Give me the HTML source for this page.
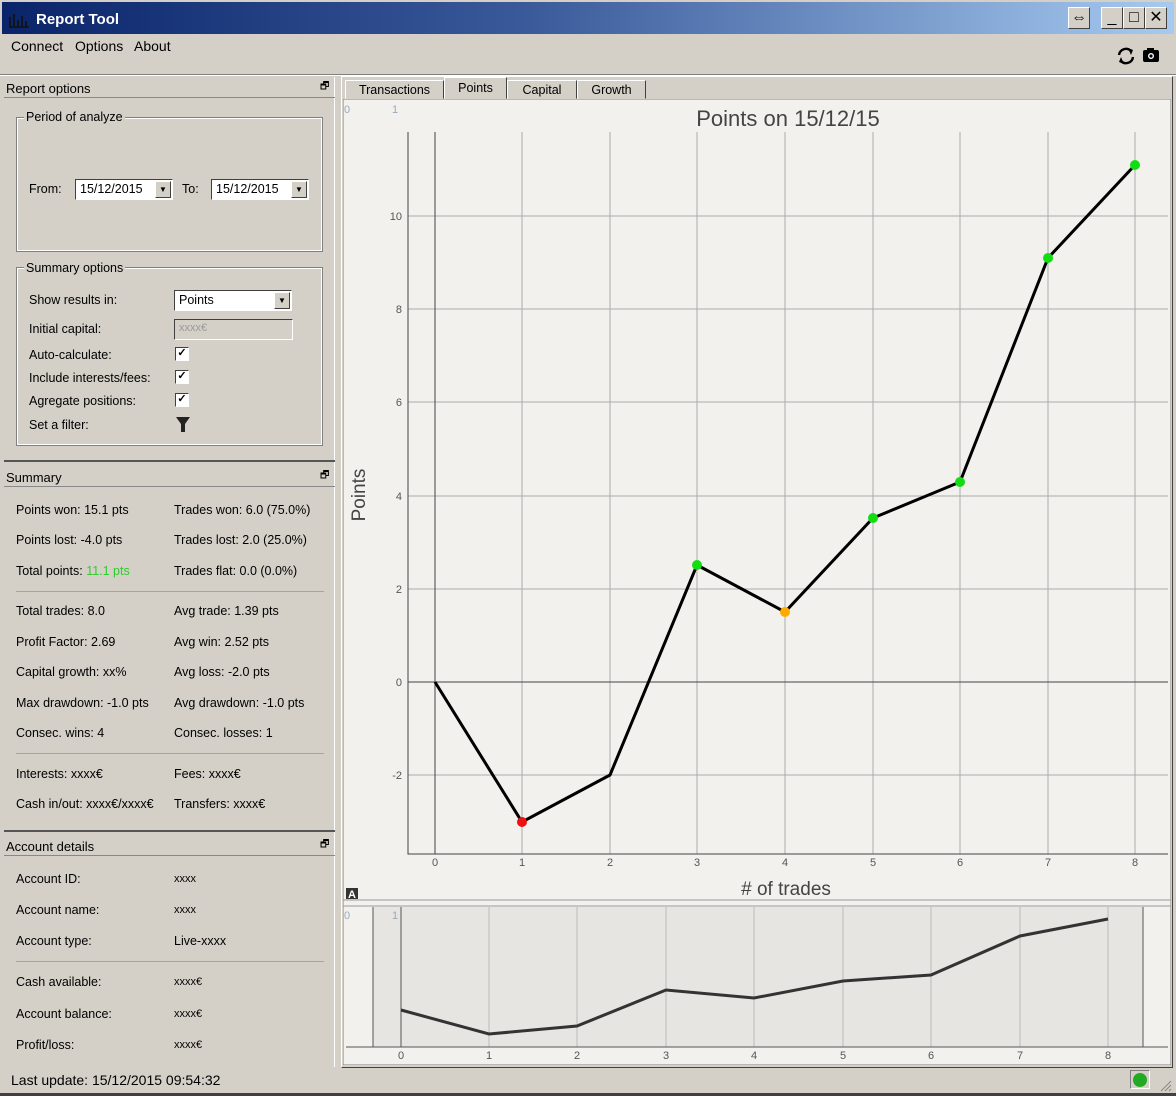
<!DOCTYPE html>
<html><head><meta charset="utf-8"><style>
*{margin:0;padding:0;box-sizing:border-box}
body{width:1176px;height:1096px;background:#d4d0c8;font-family:"Liberation Sans",Tahoma,sans-serif;font-size:12.5px;color:#000;position:relative;overflow:hidden}
.a{position:absolute;white-space:nowrap}
.title{left:0;top:0;width:1176px;height:34px;background:linear-gradient(90deg,#0a246a 0%,#3a5a9a 45%,#a6caf0 100%);border:2px solid #d4d0c8;border-bottom:none}
.btn{position:absolute;top:7px;width:22px;height:22px;background:#d4d0c8;border:1px solid;border-color:#fff #404040 #404040 #fff;font-size:16px;text-align:center;line-height:20px}
.hdr{height:20px;border-bottom:1px solid #888;padding:3px 2px;font-size:13px}
.grp{border:1px solid #fff;outline:1px solid #808080;}
.gl{background:#d4d0c8;padding:0 2px;font-size:12.5px}
.inp{background:#fff;border:1px solid;border-color:#404040 #fff #fff #404040;height:21px;font-size:12.5px;padding:2px 4px}
.dd{position:absolute;right:1px;top:1px;width:16px;height:17px;background:#d4d0c8;border:1px solid;border-color:#fff #404040 #404040 #fff;font-size:8px;text-align:center;line-height:15px}
.cb{width:14px;height:14px;background:#fff;border:1px solid;border-color:#404040 #fff #fff #404040;font-size:11px;line-height:11px;text-align:center;font-weight:bold}
.sep{height:1px;background:#a8a49c;left:16px;width:308px}
</style></head><body>
<div class="a title"></div>
<svg class="a" style="left:8px;top:11px" width="22" height="18"><path d="M2 16V6M6 16V3M10 16V9M14 16V5M18 16V10M1 16H21" stroke="#111" stroke-width="1.6"/></svg>
<div class="a" style="left:36px;top:11px;color:#fff;font-weight:bold;font-size:15px">Report Tool</div>
<div class="btn" style="left:1068px">⇔</div>
<div class="btn" style="left:1101px">_</div>
<div class="btn" style="left:1123px">□</div>
<div class="btn" style="left:1145px">✕</div>
<div class="a" style="left:11px;top:38px;font-size:14px">Connect</div>
<div class="a" style="left:75px;top:38px;font-size:14px">Options</div>
<div class="a" style="left:134px;top:38px;font-size:14px">About</div>
<svg class="a" style="left:1116px;top:46px" width="20" height="20" viewBox="0 0 20 20"><path d="M3 9A7 7 0 0 1 15 5M17 11A7 7 0 0 1 5 15" stroke="#000" stroke-width="2.4" fill="none"/><path d="M12 2l5 2-2 5zM8 18l-5-2 2-5z" fill="#000"/></svg>
<svg class="a" style="left:1142px;top:47px" width="18" height="16"><rect x="1" y="3" width="16" height="12" rx="2" fill="#000"/><rect x="5" y="1" width="7" height="3" fill="#000"/><circle cx="9" cy="9" r="3" fill="#fff"/><circle cx="9" cy="9" r="1.6" fill="#000"/></svg>
<div class="a" style="left:0;top:74px;width:1176px;height:1px;background:#808080"></div>
<div class="a" style="left:0;top:75px;width:1176px;height:1px;background:#fff"></div>

<!-- left panel -->
<div class="a" style="left:4px;top:77px;width:331px;height:990px;border-right:1px solid #fff"></div>
<div class="a hdr" style="left:4px;top:78px;width:331px">Report options</div><div class="a" style="left:320px;top:79px;font-size:10px">🗗</div>
<div class="a grp" style="left:17px;top:118px;width:305px;height:133px"></div>
<div class="a gl" style="left:24px;top:110px">Period of analyze</div>
<div class="a" style="left:29px;top:182px">From:</div>
<div class="a inp" style="left:75px;top:179px;width:98px">15/12/2015<div class="dd">▼</div></div>
<div class="a" style="left:182px;top:182px">To:</div>
<div class="a inp" style="left:211px;top:179px;width:98px">15/12/2015<div class="dd">▼</div></div>
<div class="a grp" style="left:17px;top:268px;width:305px;height:177px"></div>
<div class="a gl" style="left:24px;top:261px">Summary options</div>
<div class="a" style="left:29px;top:293px">Show results in:</div>
<div class="a inp" style="left:174px;top:290px;width:118px">Points<div class="dd">▼</div></div>
<div class="a" style="left:29px;top:322px">Initial capital:</div>
<div class="a inp" style="left:174px;top:319px;width:119px;background:#d4d0c8;color:#999;font-size:11px">xxxx€</div>
<div class="a" style="left:29px;top:348px">Auto-calculate:</div><div class="a cb" style="left:175px;top:347px">✓</div>
<div class="a" style="left:29px;top:371px">Include interests/fees:</div><div class="a cb" style="left:175px;top:370px">✓</div>
<div class="a" style="left:29px;top:394px">Agregate positions:</div><div class="a cb" style="left:175px;top:393px">✓</div>
<div class="a" style="left:29px;top:418px">Set a filter:</div>
<svg class="a" style="left:176px;top:417px" width="14" height="16"><path d="M0 0H14L9 7V15H5V7Z" fill="#222"/></svg>

<div class="a" style="left:4px;top:460px;width:331px;height:2px;background:#555"></div>
<div class="a hdr" style="left:4px;top:467px;width:331px">Summary</div><div class="a" style="left:320px;top:468px;font-size:10px">🗗</div>
<div class="a" style="left:16px;top:503px">Points won: 15.1 pts</div><div class="a" style="left:174px;top:503px">Trades won: 6.0 (75.0%)</div>
<div class="a" style="left:16px;top:533px">Points lost: -4.0 pts</div><div class="a" style="left:174px;top:533px">Trades lost: 2.0 (25.0%)</div>
<div class="a" style="left:16px;top:564px">Total points: <span style="color:#2ecc2e">11.1 pts</span></div><div class="a" style="left:174px;top:564px">Trades flat: 0.0 (0.0%)</div>
<div class="a sep" style="top:591px"></div>
<div class="a" style="left:16px;top:604px">Total trades: 8.0</div><div class="a" style="left:174px;top:604px">Avg trade: 1.39 pts</div>
<div class="a" style="left:16px;top:635px">Profit Factor: 2.69</div><div class="a" style="left:174px;top:635px">Avg win: 2.52 pts</div>
<div class="a" style="left:16px;top:665px">Capital growth: xx%</div><div class="a" style="left:174px;top:665px">Avg loss: -2.0 pts</div>
<div class="a" style="left:16px;top:696px">Max drawdown: -1.0 pts</div><div class="a" style="left:174px;top:696px">Avg drawdown: -1.0 pts</div>
<div class="a" style="left:16px;top:726px">Consec. wins: 4</div><div class="a" style="left:174px;top:726px">Consec. losses: 1</div>
<div class="a sep" style="top:753px"></div>
<div class="a" style="left:16px;top:767px">Interests: xxxx€</div><div class="a" style="left:174px;top:767px">Fees: xxxx€</div>
<div class="a" style="left:16px;top:797px">Cash in/out: xxxx€/xxxx€</div><div class="a" style="left:174px;top:797px">Transfers: xxxx€</div>

<div class="a" style="left:4px;top:830px;width:331px;height:2px;background:#555"></div>
<div class="a hdr" style="left:4px;top:836px;width:331px">Account details</div><div class="a" style="left:320px;top:837px;font-size:10px">🗗</div>
<div class="a" style="left:16px;top:872px">Account ID:</div><div class="a" style="left:174px;top:873px;font-size:11px">xxxx</div>
<div class="a" style="left:16px;top:903px">Account name:</div><div class="a" style="left:174px;top:904px;font-size:11px">xxxx</div>
<div class="a" style="left:16px;top:934px">Account type:</div><div class="a" style="left:174px;top:934px">Live-xxxx</div>
<div class="a sep" style="top:961px"></div>
<div class="a" style="left:16px;top:975px">Cash available:</div><div class="a" style="left:174px;top:976px;font-size:11px">xxxx€</div>
<div class="a" style="left:16px;top:1007px">Account balance:</div><div class="a" style="left:174px;top:1008px;font-size:11px">xxxx€</div>
<div class="a" style="left:16px;top:1038px">Profit/loss:</div><div class="a" style="left:174px;top:1039px;font-size:11px">xxxx€</div>
<div class="a" style="left:11px;top:1072px;font-size:14px">Last update: 15/12/2015 09:54:32</div>
<div class="a" style="left:1130px;top:1070px;width:20px;height:19px;border:1px solid;border-color:#808080 #fff #fff #808080"></div>
<div class="a" style="left:1133px;top:1073px;width:14px;height:14px;border-radius:50%;background:#22aa22"></div>
<div class="a" style="left:0;top:1093px;width:1176px;height:3px;background:#404040"></div>

<!-- tabs -->
<div class="a" style="left:341px;top:76px;width:832px;height:992px;border:1px solid;border-color:#fff #404040 #404040 #fff"></div>
<div class="a" style="left:345px;top:80px;width:99px;height:19px;border:1px solid;border-color:#fff #404040 #d4d0c8 #fff;text-align:center;padding-top:2px">Transactions</div>
<div class="a" style="left:444px;top:77px;width:63px;height:22px;border:1px solid;border-color:#fff #404040 #d4d0c8 #fff;text-align:center;padding-top:3px;background:#d4d0c8">Points</div>
<div class="a" style="left:507px;top:80px;width:70px;height:19px;border:1px solid;border-color:#fff #404040 #d4d0c8 #fff;text-align:center;padding-top:2px">Capital</div>
<div class="a" style="left:577px;top:80px;width:69px;height:19px;border:1px solid;border-color:#fff #404040 #d4d0c8 #fff;text-align:center;padding-top:2px">Growth</div>

<svg class="a" style="left:343px;top:99px" width="828" height="966" viewBox="343 99 828 966" font-family="Liberation Sans,sans-serif">
<rect x="343" y="99" width="828" height="966" fill="#f2f1ed" stroke="#808080"/>
<text x="344" y="113" font-size="11" fill="#9ab">0</text><text x="392" y="113" font-size="11" fill="#9ab">1</text>
<text x="788" y="126" font-size="22" fill="#444" text-anchor="middle">Points on 15/12/15</text>
<g stroke="#aaa" stroke-width="1">
<path d="M522 132V854M610 132V854M697 132V854M785 132V854M873 132V854M960 132V854M1048 132V854M1135 132V854"/>
<path d="M408 216H1168M408 309H1168M408 402H1168M408 496H1168M408 589H1168M408 775H1168"/>
</g>
<path d="M408 132V854H1168M435 132V854M408 682H1168" stroke="#444" fill="none"/>
<g font-size="11" fill="#555" text-anchor="end">
<text x="402" y="220">10</text><text x="402" y="313">8</text><text x="402" y="406">6</text><text x="402" y="500">4</text><text x="402" y="593">2</text><text x="402" y="686">0</text><text x="402" y="779">-2</text></g>
<g font-size="11" fill="#555" text-anchor="middle">
<text x="435" y="866">0</text><text x="522" y="866">1</text><text x="610" y="866">2</text><text x="697" y="866">3</text><text x="785" y="866">4</text><text x="873" y="866">5</text><text x="960" y="866">6</text><text x="1048" y="866">7</text><text x="1135" y="866">8</text></g>
<text x="786" y="895" font-size="19" fill="#444" text-anchor="middle"># of trades</text>
<text transform="translate(365,495) rotate(-90)" font-size="19" fill="#444" text-anchor="middle">Points</text>
<polyline points="435,682 522,822 610,775 697,565 785,612 873,518 960,482 1048,258 1135,165" fill="none" stroke="#000" stroke-width="3"/>
<g fill="#11dd11"><circle cx="697" cy="565" r="5"/><circle cx="873" cy="518" r="5"/><circle cx="960" cy="482" r="5"/><circle cx="1048" cy="258" r="5"/><circle cx="1135" cy="165" r="5"/></g>
<circle cx="522" cy="822" r="5" fill="#ee1111"/><circle cx="785" cy="612" r="5" fill="#ffaa00"/>
<rect x="346" y="888" width="12" height="11" fill="#333"/><text x="352" y="898" font-size="11" font-weight="bold" fill="#fff" text-anchor="middle">A</text>
<path d="M343 900H1171M343 906H1171" stroke="#999"/>
<rect x="373" y="907" width="770" height="140" fill="#e6e5e1"/>
<text x="344" y="919" font-size="11" fill="#9ab">0</text><text x="392" y="919" font-size="11" fill="#9ab">1</text>
<path d="M489 907V1047M577 907V1047M666 907V1047M754 907V1047M843 907V1047M931 907V1047M1020 907V1047M1108 907V1047" stroke="#bbb"/>
<path d="M373 907V1047M1143 907V1047M401 907V1047M346 1047H1168" stroke="#555"/>
<polyline points="401,1010 489,1034 577,1026 666,990 754,998 843,981 931,975 1020,936 1108,919" fill="none" stroke="#333" stroke-width="3"/>
<g font-size="11" fill="#555" text-anchor="middle">
<text x="401" y="1059">0</text><text x="489" y="1059">1</text><text x="577" y="1059">2</text><text x="666" y="1059">3</text><text x="754" y="1059">4</text><text x="843" y="1059">5</text><text x="931" y="1059">6</text><text x="1020" y="1059">7</text><text x="1108" y="1059">8</text></g>
</svg>
<svg class="a" style="left:1158px;top:1078px" width="14" height="14"><path d="M13 3L3 13M13 7L7 13M13 11L11 13" stroke="#888"/></svg>
</body></html>
